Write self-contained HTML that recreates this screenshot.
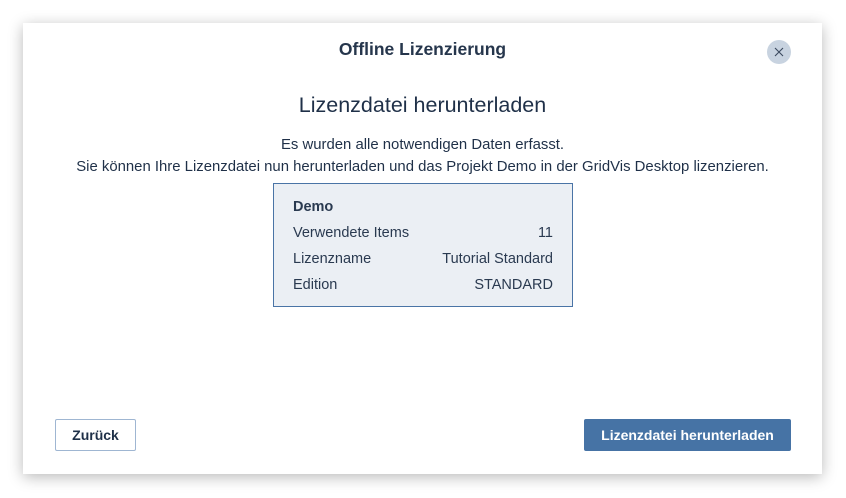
<!DOCTYPE html>
<html><head><meta charset="utf-8"><style>
body{margin:0;width:846px;height:498px;background:#fff;font-family:"Liberation Sans",sans-serif;position:relative;overflow:hidden}
.dlg{position:absolute;left:23px;top:23px;width:799px;height:451px;background:#fff;box-shadow:0 3px 14px rgba(0,0,0,.28)}
.t{position:absolute;left:0;right:0;text-align:center;color:#1f3048}
.close{position:absolute;left:744px;top:17px;width:24px;height:24px;border-radius:50%;background:#c8d3e0}
.box{position:absolute;left:250px;top:160px;width:298px;height:122px;background:#ebeff4;border:1px solid #4a74a6;color:#2a3a50;font-size:14.5px}
.row{position:absolute;left:19px;right:19px;display:flex;justify-content:space-between}
.btn{position:absolute;font-weight:bold;font-size:14px;text-align:center;border-radius:2px}
</style></head><body>
<div class="dlg">
<div class="t" style="top:16px;font-size:17.5px;font-weight:bold;color:#26364c">Offline Lizenzierung</div>
<div class="close"><svg width="24" height="24" viewBox="0 0 24 24"><path d="M8 8L16 16M16 8L8 16" stroke="#3b4a5e" stroke-width="1.1"/></svg></div>
<div class="t" style="top:70px;font-size:21.5px">Lizenzdatei herunterladen</div>
<div class="t" style="top:111px;font-size:14.9px;line-height:22px">Es wurden alle notwendigen Daten erfasst.<br>Sie können Ihre Lizenzdatei nun herunterladen und das Projekt Demo in der GridVis Desktop lizenzieren.</div>
<div class="box">
<div class="row" style="top:15px;font-weight:bold">Demo</div>
<div class="row" style="top:41px"><span>Verwendete Items</span><span>11</span></div>
<div class="row" style="top:67px"><span>Lizenzname</span><span>Tutorial Standard</span></div>
<div class="row" style="top:93px"><span>Edition</span><span>STANDARD</span></div>
</div>
<div class="btn" style="left:32px;top:396px;width:79px;height:30px;line-height:30px;border:1px solid #9fb6d2;color:#1f3048">Zurück</div>
<div class="btn" style="left:561px;top:396px;width:207px;height:32px;line-height:32px;background:#4673a5;color:#fff">Lizenzdatei herunterladen</div>
</div>
</body></html>
